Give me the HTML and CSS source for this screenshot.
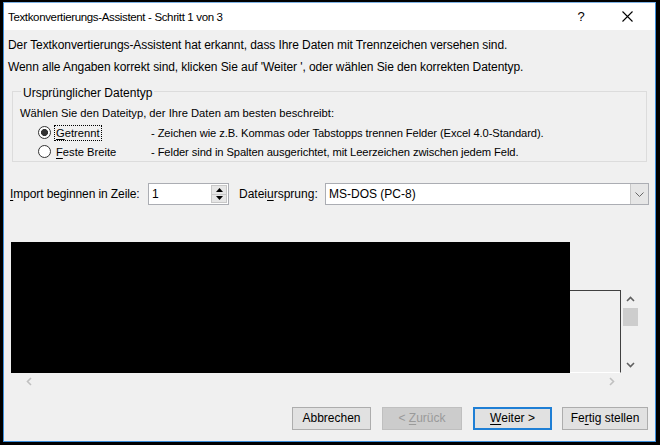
FILE: index.html
```html
<!DOCTYPE html>
<html lang="de">
<head>
    <meta charset="UTF-8">
    <title>Textkonvertierungs-Assistent - Schritt 1 von 3</title>
    <link rel="stylesheet" href="styles.css">
</head>
<body>
    <div class="window">
        <div class="titlebar">
            <div class="title">Textkonvertierungs-Assistent - Schritt 1 von 3</div>
            <div class="help">?</div>
            <div class="close">
                <svg width="11" height="11" viewBox="0 0 11 11"><path d="M0.5 0.5 L10.5 10.5 M10.5 0.5 L0.5 10.5" stroke="#000" stroke-width="1.1" fill="none"/></svg>
            </div>
        </div>
        <div class="content">
            <div class="intro">
                <div class="line">Der Textkonvertierungs-Assistent hat erkannt, dass Ihre Daten mit Trennzeichen versehen sind.</div>
                <div class="line">Wenn alle Angaben korrekt sind, klicken Sie auf 'Weiter ', oder wählen Sie den korrekten Datentyp.</div>
            </div>

            <fieldset class="group">
                <legend>Ursprünglicher Datentyp</legend>
                <div class="group-line">Wählen Sie den Dateityp, der Ihre Daten am besten beschreibt:</div>
                <div class="option">
                    <span class="radio checked"></span>
                    <span class="opt-label"><span class="focus"><u>G</u>etrennt</span></span>
                    <span class="opt-desc">- Zeichen wie z.B. Kommas oder Tabstopps trennen Felder (Excel 4.0-Standard).</span>
                </div>
                <div class="option">
                    <span class="radio"></span>
                    <span class="opt-label"><u>F</u>este Breite</span>
                    <span class="opt-desc">- Felder sind in Spalten ausgerichtet, mit Leerzeichen zwischen jedem Feld.</span>
                </div>
            </fieldset>

            <div class="import-row">
                <span class="import-label"><u>I</u>mport beginnen in Zeile:</span>
                <div class="spin">
                    <span class="spin-value">1</span>
                    <div class="spin-buttons">
                        <div class="spin-btn"><svg width="7" height="4" viewBox="0 0 7 4"><path d="M0 4 L3.5 0 L7 4 Z" fill="#000"/></svg></div>
                        <div class="spin-btn"><svg width="7" height="4" viewBox="0 0 7 4"><path d="M0 0 L3.5 4 L7 0 Z" fill="#000"/></svg></div>
                    </div>
                </div>
                <span class="origin-label">Datei<u>u</u>rsprung:</span>
                <div class="combo">
                    <span class="combo-value">MS-DOS (PC-8)</span>
                    <div class="combo-btn"><svg width="9" height="5" viewBox="0 0 9 5"><path d="M0.5 0.5 L4.5 4.5 L8.5 0.5" stroke="#666" stroke-width="1" fill="none"/></svg></div>
                </div>
            </div>

            <div class="preview">
                <div class="preview-data"></div>
                <div class="preview-frame"></div>
                <div class="vscroll">
                    <div class="arrow"><svg width="9" height="6" viewBox="0 0 9 6"><path d="M1 5 L4.5 1.5 L8 5" stroke="#606060" stroke-width="1.6" fill="none"/></svg></div>
                    <div class="thumb"></div>
                    <div class="track"></div>
                    <div class="arrow"><svg width="9" height="6" viewBox="0 0 9 6"><path d="M1 1 L4.5 4.5 L8 1" stroke="#606060" stroke-width="1.6" fill="none"/></svg></div>
                </div>
            </div>
            <div class="hscroll">
                <div class="arrow"><svg width="6" height="9" viewBox="0 0 6 9"><path d="M5 1 L1.5 4.5 L5 8" stroke="#c0c0c0" stroke-width="1.6" fill="none"/></svg></div>
                <div class="arrow"><svg width="6" height="9" viewBox="0 0 6 9"><path d="M1 1 L4.5 4.5 L1 8" stroke="#c0c0c0" stroke-width="1.6" fill="none"/></svg></div>
            </div>

            <div class="buttons">
                <div class="button cancel">Abbrechen</div>
                <div class="button back disabled">&lt; <u>Z</u>urück</div>
                <div class="button next default"><u>W</u>eiter &gt;</div>
                <div class="button finish">Fe<u>r</u>tig stellen</div>
            </div>
        </div>
    </div>
</body>
</html>
```

FILE: styles.css
```css
body {
    margin: 0;
    width: 660px;
    height: 445px;
    overflow: hidden;
    background-color: #000;
    font-family: 'Liberation Sans', Arial, sans-serif;
    font-size: 12px;
    color: #000;
}
u {
    text-decoration-thickness: 1px;
    text-underline-offset: 2px;
}
.window {
    margin: 2px 0 0 3px;
    width: 653px;
    height: 440px;
    box-sizing: border-box;
    border: 1px solid #3d8fdc;
    border-top-color: #7fb3e6;
    background-color: #f0f0f0;
    display: flex;
    flex-direction: column;
}
.titlebar {
    height: 27px;
    flex-shrink: 0;
    background-color: #fff;
    display: flex;
    align-items: center;
    padding-left: 4px;
}
.title {
    flex: 1;
    font-size: 11.5px;
    letter-spacing: -0.35px;
}
.help {
    width: 46px;
    text-align: center;
    font-size: 13px;
}
.close {
    width: 46px;
    margin-right: 5px;
    display: flex;
    justify-content: center;
}
.content {
    flex: 1;
    display: flex;
    flex-direction: column;
}
.intro {
    padding: 4px 0 0 4px;
    letter-spacing: -0.08px;
}
.intro .line {
    line-height: 22px;
}
.group {
    margin: 5px 8px 0 8px;
    padding: 4px 0 0 7px;
    border: 1px solid #dcdcdc;
    font-size: 11.2px;
}
.group legend {
    padding: 3px 2px 0 2px;
    margin-left: 1px;
    line-height: 14px;
    font-size: 12px;
}
.group-line {
    line-height: 19px;
}
.option {
    display: flex;
    align-items: center;
    height: 19px;
    padding-left: 18px;
}
.radio {
    width: 13px;
    height: 13px;
    box-sizing: border-box;
    border: 1px solid #333;
    border-radius: 50%;
    background-color: #fff;
    margin-right: 5px;
}
.radio.checked {
    background: radial-gradient(circle, #333 3.2px, #fff 3.8px);
}
.opt-label {
    width: 95px;
}
.focus {
    outline: 1px dotted #000;
    outline-offset: 1px;
}
.opt-desc {
    letter-spacing: -0.1px;
}
.import-row {
    display: flex;
    align-items: center;
    margin-top: 21px;
    padding-left: 6px;
    height: 22px;
}
.import-label {
    width: 138px;
    letter-spacing: -0.1px;
}
.spin {
    width: 81px;
    height: 22px;
    box-sizing: border-box;
    border: 1px solid #abadb3;
    background-color: #fff;
    display: flex;
}
.spin-value {
    flex: 1;
    padding-left: 3px;
    line-height: 20px;
}
.spin-buttons {
    width: 16px;
    display: flex;
    flex-direction: column;
    padding: 1px 1px 1px 0;
}
.spin-btn {
    flex: 1;
    background-color: #e6e6e6;
    border: 1px solid #c8c8c8;
    display: flex;
    align-items: center;
    justify-content: center;
}
.spin-btn + .spin-btn {
    border-top: none;
}
.origin-label {
    margin-left: 10px;
    width: 86px;
}
.combo {
    width: 324px;
    height: 22px;
    box-sizing: border-box;
    border: 1px solid #abadb3;
    background-color: #fff;
    display: flex;
}
.combo-value {
    flex: 1;
    padding-left: 3px;
    line-height: 20px;
}
.combo-btn {
    width: 17px;
    background-color: #e6e6e6;
    border-left: 1px solid #c8c8c8;
    display: flex;
    align-items: center;
    justify-content: center;
}
.preview {
    display: flex;
    margin: 37px 0 0 7px;
    height: 131px;
}
.preview-data {
    width: 559px;
    background-color: #000;
}
.preview-frame {
    width: 50px;
    height: 81px;
    margin-top: 48px;
    border-top: 1px solid #404040;
    border-right: 1px solid #404040;
    border-bottom: 1px solid #fff;
}
.vscroll {
    width: 17px;
    margin: 48px 0 0 1px;
    height: 83px;
    display: flex;
    flex-direction: column;
}
.vscroll .arrow {
    height: 17px;
    display: flex;
    align-items: center;
    justify-content: center;
}
.vscroll .thumb {
    height: 18px;
    margin: 1px 1px 0 1px;
    background-color: #cdcdcd;
}
.vscroll .track {
    flex: 1;
}
.hscroll {
    display: flex;
    justify-content: space-between;
    width: 600px;
    margin-left: 16px;
    height: 17px;
}
.hscroll .arrow {
    width: 17px;
    display: flex;
    align-items: center;
    justify-content: center;
}
.buttons {
    display: flex;
    justify-content: flex-end;
    gap: 11px;
    margin-top: 17px;
    padding-right: 7px;
}
.button {
    width: 79px;
    height: 23px;
    box-sizing: border-box;
    border: 1px solid #adadad;
    background-color: #e1e1e1;
    text-align: center;
    line-height: 21px;
}
.button.back {
    width: 80px;
}
.button.finish {
    width: 86px;
    margin-left: -1px;
}
.button.disabled {
    background-color: #cccccc;
    border-color: #bfbfbf;
    color: #9a9a9a;
}
.button.default {
    border: 2px solid #1f7fd5;
    line-height: 19px;
}
```
